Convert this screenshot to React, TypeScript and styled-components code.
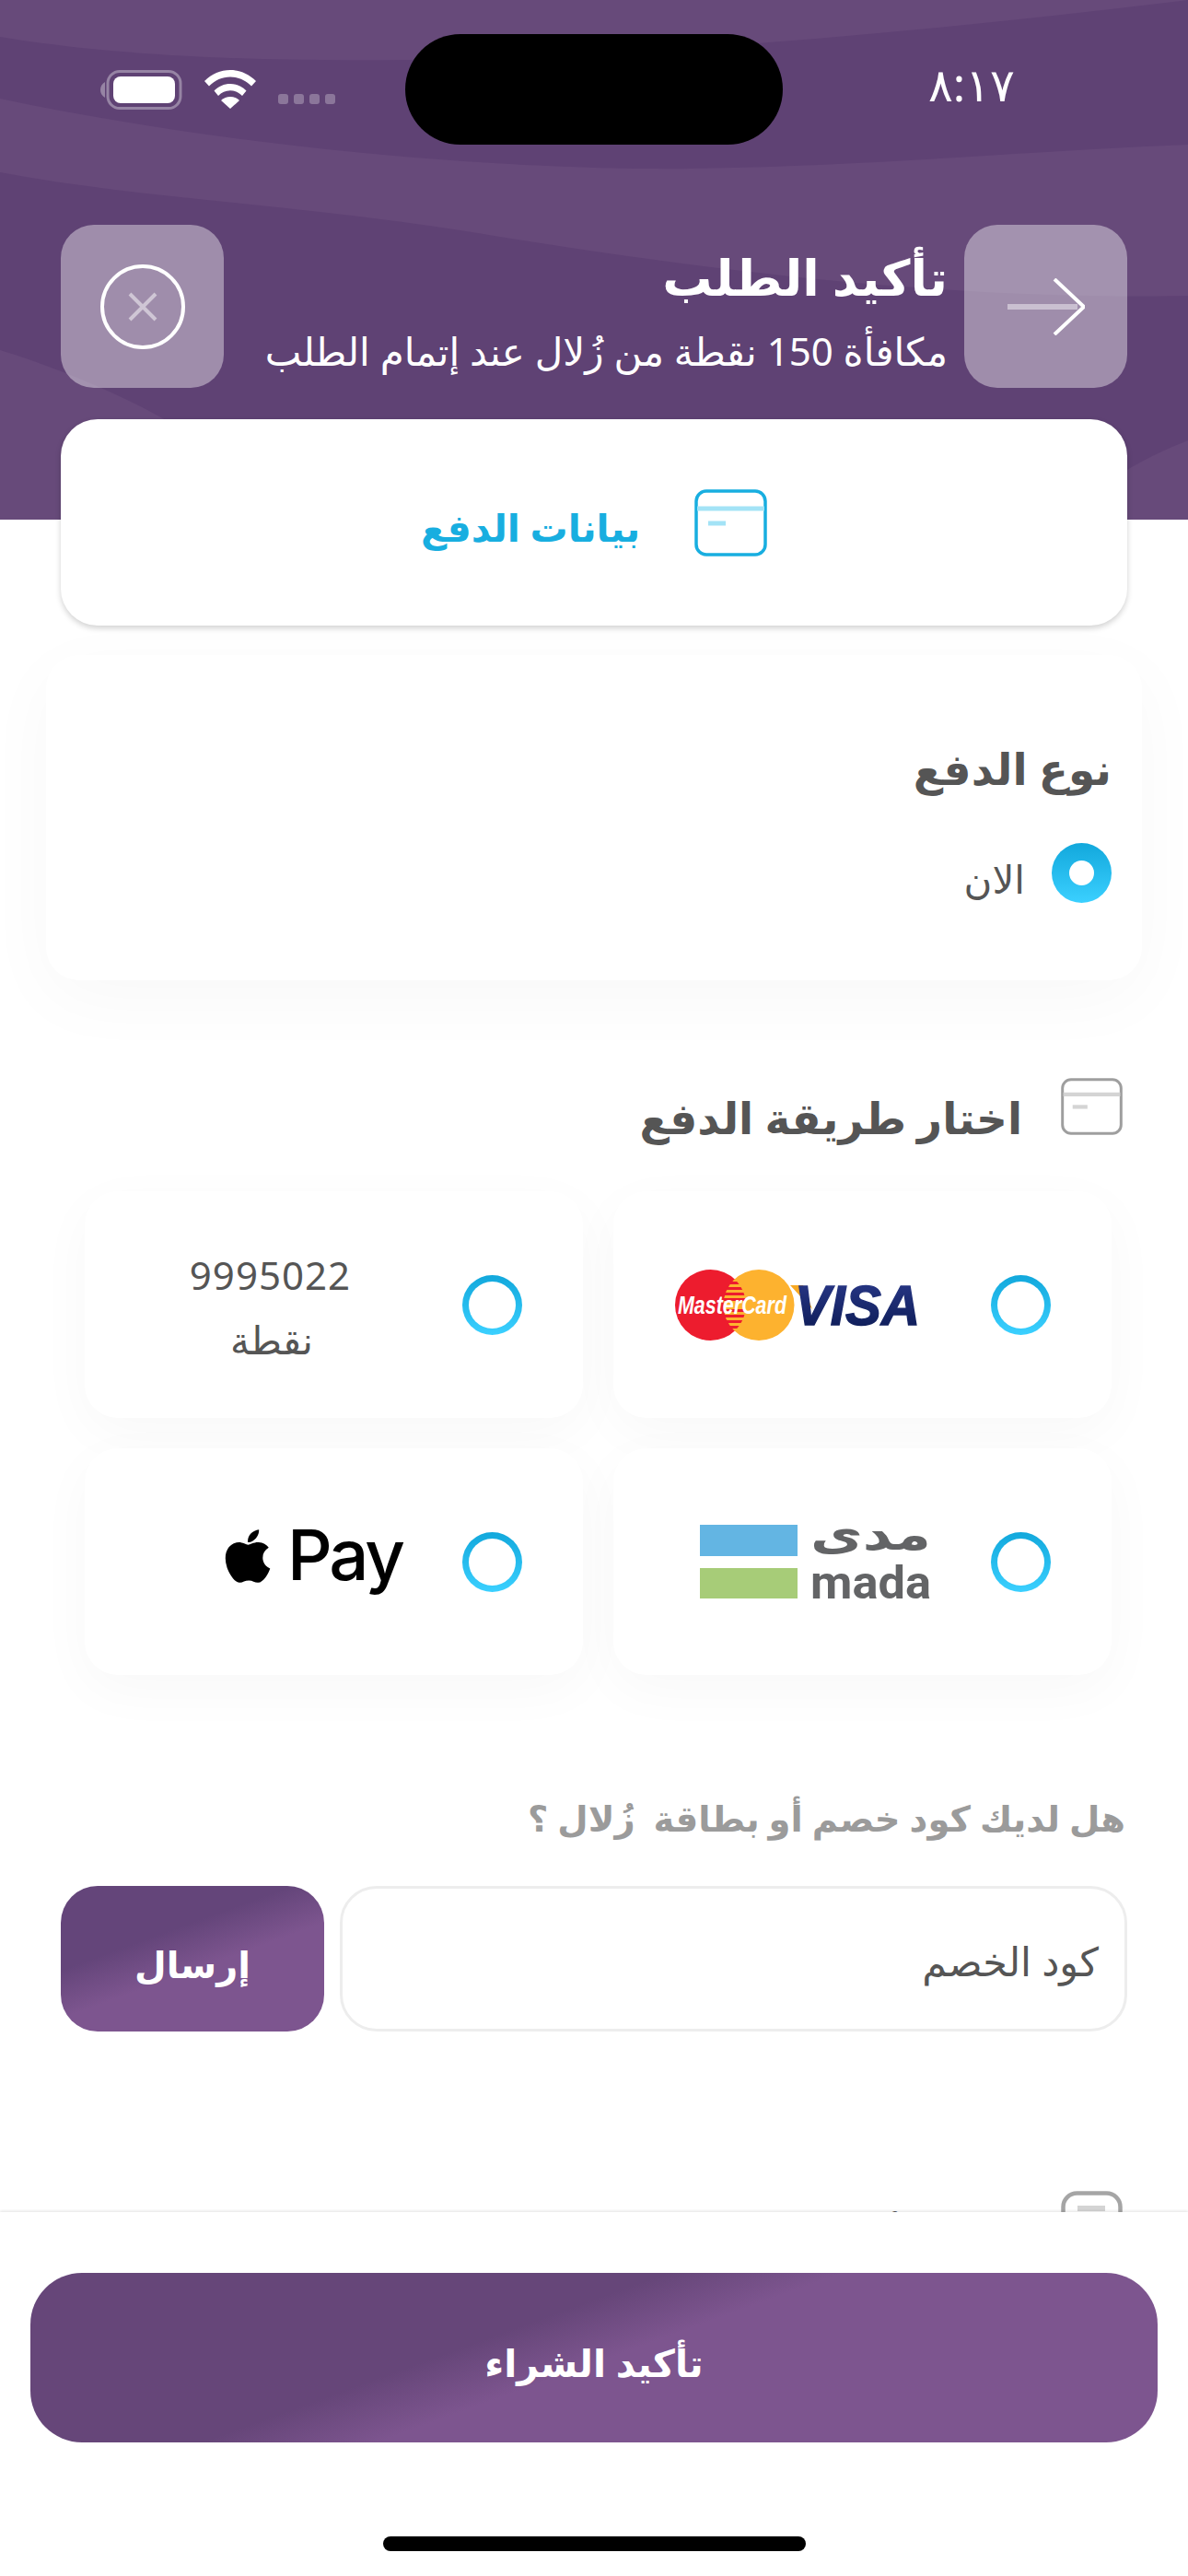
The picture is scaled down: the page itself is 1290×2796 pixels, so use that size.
import React from "react";
import styled, { createGlobalStyle } from "styled-components";
import { FaApple } from "react-icons/fa";

const GlobalStyle = createGlobalStyle`
  html, body {
    margin: 0;
    padding: 0;
    background: #fff;
  }
  * {
    box-sizing: border-box;
  }
`;

const Screen = styled.div`
  position: relative;
  width: 1290px;
  height: 2796px;
  overflow: hidden;
  background: #fff;
  direction: rtl;
  font-family: "Noto Sans", "DejaVu Sans", sans-serif;
  color: #555;
`;

const Header = styled.header`
  position: relative;
  height: 564px;
  background: #5f4274;
  overflow: hidden;
`;

const Waves = styled.svg`
  position: absolute;
  inset: 0;
`;

const StatusBar = styled.div`
  position: relative;
  direction: ltr;
  display: flex;
  align-items: center;
  height: 120px;
  margin-top: 37px;
  padding-left: 108px;
`;

const StatusIcons = styled.div`
  display: flex;
  align-items: center;
  width: 258px;
  gap: 24px;
`;

const Dots = styled.div`
  display: flex;
  gap: 6px;
  margin-top: 21px;
`;

const Dot = styled.span`
  width: 11px;
  height: 11px;
  border-radius: 3px;
  background: rgba(255, 255, 255, 0.28);
`;

const Island = styled.div`
  width: 410px;
  height: 120px;
  margin-left: 74px;
  border-radius: 60px;
  background: #000;
`;

const Clock = styled.div`
  margin-left: 158px;
  margin-top: -12px;
  color: #fff;
  font-size: 50px;
  line-height: 1;
`;

const Nav = styled.div`
  position: relative;
  display: flex;
  align-items: center;
  gap: 18px;
  height: 177px;
  margin-top: 87px;
  padding: 0 66px;
`;

const NavButton = styled.div`
  display: flex;
  align-items: center;
  justify-content: center;
  flex: none;
  width: 177px;
  height: 177px;
  border-radius: 36px;
  background: rgba(255, 255, 255, 0.4);
`;

const NavText = styled.div`
  flex: 1;
  color: #fff;
`;

const NavTitle = styled.h1`
  margin: 0;
  font-size: 54px;
  line-height: 96px;
  font-weight: 700;
`;

const NavSubtitle = styled.p`
  margin: 0;
  font-size: 42px;
  line-height: 66px;
  white-space: nowrap;
`;

const StepCard = styled.div`
  position: relative;
  display: flex;
  align-items: center;
  justify-content: center;
  gap: 59px;
  height: 224px;
  margin: -109px 66px 0;
  border-radius: 40px;
  background: #fff;
  box-shadow: 0 3px 6px rgba(0, 0, 0, 0.18);
  color: #18aee0;
  font-size: 41px;
  font-weight: 700;
`;

const StepLabel = styled.span`
  padding-top: 10px;
`;

const Panel = styled.section`
  height: 353px;
  margin: 32px 50px 0;
  padding: 88px 33px 0;
  border-radius: 36px;
  background: #fff;
  box-shadow: 0 20px 80px rgba(0, 0, 0, 0.03);
`;

const SectionTitle = styled.h2`
  margin: 0;
  font-size: 47px;
  line-height: 70px;
  font-weight: 700;
  color: #555;
`;

const HeadingTitle = styled(SectionTitle)`
  padding-top: 8px;
`;

const RadioRow = styled.div`
  display: flex;
  align-items: center;
  gap: 29px;
  margin-top: 44px;
  font-size: 42px;
`;

const RadioLabel = styled.span`
  padding-top: 12px;
`;

const Radio = styled.span<{ $checked?: boolean }>`
  position: relative;
  flex: none;
  width: 65px;
  height: 65px;
  border-radius: 50%;
  background: linear-gradient(180deg, #12a8dc, #3bd0ff);
  &::after {
    content: "";
    position: absolute;
    inset: ${(p) => (p.$checked ? "19px" : "7px")};
    border-radius: 50%;
    background: #fff;
  }
`;

const MethodHeading = styled.div`
  display: flex;
  align-items: flex-start;
  gap: 42px;
  height: 62px;
  margin: 106px 71px 0 0;
`;

const MethodGrid = styled.div`
  display: grid;
  grid-template-columns: 541px 541px;
  grid-auto-rows: 246px;
  gap: 33px;
  margin: 61px 83px 0 0;
`;

const MethodCard = styled.div`
  display: flex;
  align-items: center;
  gap: 65px;
  padding-right: 66px;
  border-radius: 36px;
  background: #fff;
  box-shadow: 0 16px 60px rgba(0, 0, 0, 0.03);
`;

const Points = styled.div`
  margin-right: 56px;
  width: 172px;
  padding-top: 6px;
  text-align: center;
  font-size: 42px;
  line-height: 70px;
`;

const PointsValue = styled.div`
  letter-spacing: 1px;
`;

const ApplePay = styled.div`
  direction: ltr;
  display: flex;
  align-items: flex-start;
  gap: 10px;
  margin-bottom: 12px;
  color: #000;
  font-family: Inter, sans-serif;
  font-weight: 500;
  font-size: 76px;
  line-height: 62px;
  letter-spacing: -3px;
`;

const Question = styled.p`
  margin: 129px 68px 0 0;
  font-size: 38.5px;
  line-height: 52px;
  font-weight: 700;
  color: #9b9b9b;
`;

const CouponRow = styled.div`
  display: flex;
  gap: 17px;
  height: 158px;
  margin: 48px 66px 0;
`;

const CouponInput = styled.div`
  flex: 1;
  display: flex;
  align-items: center;
  padding: 4px 28px 0;
  border: 3px solid #ededed;
  border-radius: 40px;
  font-size: 43px;
  color: #555;
`;

const SendButton = styled.div`
  display: flex;
  align-items: center;
  justify-content: center;
  width: 286px;
  padding-top: 10px;
  border-radius: 40px;
  background: linear-gradient(160deg, #64457a 0%, #64457a 35%, #7d558f 55%, #7d558f 100%);
  color: #fff;
  font-size: 40px;
  font-weight: 700;
`;

const NextHeading = styled(MethodHeading)`
  margin-top: 173px;
`;

const Footer = styled.footer`
  position: absolute;
  left: 0;
  right: 0;
  bottom: 0;
  height: 395px;
  padding: 66px 33px 0;
  background: #fff;
  box-shadow: 0 -1px 3px rgba(0, 0, 0, 0.12);
`;

const ConfirmButton = styled.div`
  display: flex;
  align-items: center;
  justify-content: center;
  height: 184px;
  padding-top: 10px;
  border-radius: 56px;
  background: linear-gradient(160deg, #664679 0%, #664679 40%, #7d558f 51%, #7d558f 100%);
  color: #fff;
  font-size: 41px;
  font-weight: 700;
`;

const HomeBar = styled.div`
  width: 459px;
  height: 16px;
  margin: 102px auto 0;
  border-radius: 8px;
  background: #000;
`;

const LogoSvg = styled.svg`
  flex: none;
  overflow: visible;
`;

const CardIcon: React.FC<{ color: string; tint: string; width?: number; height?: number }> = ({
  color,
  tint,
  width = 79,
  height = 73,
}) => (
  <svg width={width} height={height} viewBox="0 0 79 73" fill="none" style={{ flex: "none" }}>
    <rect x="2" y="2" width="75" height="69" rx="11" stroke={color} strokeWidth="3.5" />
    <path d="M3 21h73" stroke={tint} strokeWidth="5" />
    <path d="M15 37h19" stroke={tint} strokeWidth="5" />
  </svg>
);

const NoteIcon = () => (
  <svg width="67" height="62" viewBox="0 0 67 62" fill="none" style={{ flex: "none" }}>
    <rect x="2.500" y="2.500" width="62" height="57" rx="15" stroke="#a5a5a5" strokeWidth="4.500" />
    <path d="M18 19h30" stroke="#d4d4d4" strokeWidth="6" />
  </svg>
);

const BatteryIcon = () => (
  <svg width="90" height="43" viewBox="0 0 90 43" fill="none">
    <path d="M6 13c-3.500 2-5 5-5 8.500s1.500 6.500 5 8.500z" fill="#fff" fillOpacity=".35" />
    <rect x="9" y="1.500" width="79" height="40" rx="13" stroke="#fff" strokeOpacity=".35" strokeWidth="3" />
    <rect x="15" y="7" width="67" height="29" rx="8" fill="#fff" />
  </svg>
);

const WifiIcon = () => (
  <svg width="56" height="42" viewBox="0 0 56 42" fill="#fff">
    <path d="M28 0c10.500 0 20 4.200 28 12l-5 5.500C44.500 11 36.800 7.500 28 7.500S11.500 11 5 17.500L0 12C8 4.200 17.500 0 28 0z" />
    <path d="M28 15c6.700 0 12.500 2.600 17.500 7.500L41 28c-3.500-3.700-8-5.800-13-5.800S18.500 24.300 15 28l-4.500-5.500C15.500 17.600 21.300 15 28 15z" />
    <path d="M28 29c3.800 0 7 1.300 10 4L28 42 18 33c3-2.700 6.200-4 10-4z" />
  </svg>
);

const VisaMasterLogo = () => (
  <LogoSvg width="265" height="79" viewBox="0 0 265 79" style={{ marginRight: 13 }}>
    <defs>
      <clipPath id="overlap">
        <circle cx="38.500" cy="39.500" r="38.500" />
      </clipPath>
      <linearGradient id="visa" x1="0" y1="0" x2="0" y2="1">
        <stop offset="0" stopColor="#2b3a8c" />
        <stop offset="1" stopColor="#0b1a52" />
      </linearGradient>
    </defs>
    <path d="M125 18h14l10 26z" fill="#f7a823" />
    <text
      x="130"
      y="61"
      direction="ltr"
      fontFamily="Liberation Sans"
      fontStyle="italic"
      fontWeight="700"
      fontSize="62"
      fill="url(#visa)"
      stroke="url(#visa)"
      strokeWidth="1.500"
      textLength="136"
      lengthAdjust="spacingAndGlyphs"
    >
      VISA
    </text>
    <circle cx="38.500" cy="39.500" r="38.500" fill="#ed1c2e" />
    <circle cx="91" cy="39.500" r="38.500" fill="#fdb22f" />
    <g clipPath="url(#overlap)" fill="#ed1c2e">
      {[14, 20, 26, 32, 44, 50, 56, 62].map((y) => (
        <rect key={y} x="52" y={y} width="26" height="3" />
      ))}
    </g>
    <text
      x="3"
      y="49"
      direction="ltr"
      fontFamily="Liberation Sans"
      fontStyle="italic"
      fontWeight="700"
      fontSize="27"
      fill="#fff"
      textLength="118"
      lengthAdjust="spacingAndGlyphs"
    >
      MasterCard
    </text>
  </LogoSvg>
);

const MadaLogo = () => (
  <LogoSvg width="251" height="81" viewBox="0 0 251 81">
    <rect width="106" height="34" fill="#63b5e3" />
    <rect y="47" width="106" height="33" fill="#a7cc78" />
    <text
      x="120"
      y="27"
      direction="ltr"
      fontFamily="DejaVu Sans"
      fontWeight="700"
      fontSize="48"
      fill="#636466"
      textLength="131"
      lengthAdjust="spacingAndGlyphs"
    >
      مدى
    </text>
    <text
      x="120"
      y="80"
      direction="ltr"
      fontFamily="Roboto"
      fontWeight="700"
      fontSize="50"
      fill="#636466"
      textLength="131"
      lengthAdjust="spacingAndGlyphs"
    >
      mada
    </text>
  </LogoSvg>
);

export default function App() {
  return (
    <Screen>
      <GlobalStyle />
      <Header>
        <Waves width="1290" height="564" viewBox="0 0 1290 564" fill="#674a7a">
          <path d="M0 0H1290C800 60 300 90 0 40z" />
          <path d="M0 107C300 170 600 185 750 183C950 180 1100 165 1290 157V321C1050 325 800 300 500 250C300 220 150 215 0 187z" />
          <path d="M0 380C130 420 260 490 320 564H0z" />
          <path d="M1290 478C1260 490 1240 500 1224 510V564H1290z" />
        </Waves>
        <StatusBar>
          <StatusIcons>
            <BatteryIcon />
            <WifiIcon />
            <Dots>
              <Dot />
              <Dot />
              <Dot />
              <Dot />
            </Dots>
          </StatusIcons>
          <Island />
          <Clock>٨:١٧</Clock>
        </StatusBar>
        <Nav>
          <NavButton>
            <svg width="84" height="62" viewBox="0 0 84 62" fill="none">
              <path d="M0 31h76" stroke="#fff" strokeOpacity=".45" strokeWidth="6" />
              <path d="M51 1l32 30-32 30" stroke="#fff" strokeWidth="4" />
            </svg>
          </NavButton>
          <NavText>
            <NavTitle>تأكيد الطلب</NavTitle>
            <NavSubtitle>مكافأة 150 نقطة من زُلال عند إتمام الطلب</NavSubtitle>
          </NavText>
          <NavButton>
            <svg width="92" height="92" viewBox="0 0 92 92" fill="none">
              <circle cx="46" cy="46" r="44" stroke="#fff" strokeWidth="4" />
              <path d="M32 32l28 28M60 32L32 60" stroke="#fff" strokeOpacity=".5" strokeWidth="4" />
            </svg>
          </NavButton>
        </Nav>
      </Header>

      <StepCard>
        <CardIcon color="#18aee0" tint="#a3e3f6" />
        <StepLabel>بيانات الدفع</StepLabel>
      </StepCard>

      <Panel>
        <SectionTitle>نوع الدفع</SectionTitle>
        <RadioRow>
          <Radio $checked />
          <RadioLabel>الان</RadioLabel>
        </RadioRow>
      </Panel>

      <MethodHeading>
        <CardIcon color="#9e9e9e" tint="#d4d4d4" width={67} height={62} />
        <HeadingTitle>اختار طريقة الدفع</HeadingTitle>
      </MethodHeading>

      <MethodGrid>
        <MethodCard>
          <Radio />
          <VisaMasterLogo />
        </MethodCard>
        <MethodCard>
          <Radio />
          <Points>
            <PointsValue>9995022</PointsValue>
            نقطة
          </Points>
        </MethodCard>
        <MethodCard>
          <Radio />
          <MadaLogo />
        </MethodCard>
        <MethodCard>
          <Radio />
          <ApplePay>
            <FaApple size={66} />
            Pay
          </ApplePay>
        </MethodCard>
      </MethodGrid>

      <Question>هل لديك كود خصم أو بطاقة &nbsp;زُلال ؟</Question>

      <CouponRow>
        <CouponInput>كود الخصم</CouponInput>
        <SendButton>إرسال</SendButton>
      </CouponRow>

      <NextHeading>
        <NoteIcon />
        <HeadingTitle>رصيد زُلال</HeadingTitle>
      </NextHeading>

      <Footer>
        <ConfirmButton>تأكيد الشراء</ConfirmButton>
        <HomeBar />
      </Footer>
    </Screen>
  );
}
